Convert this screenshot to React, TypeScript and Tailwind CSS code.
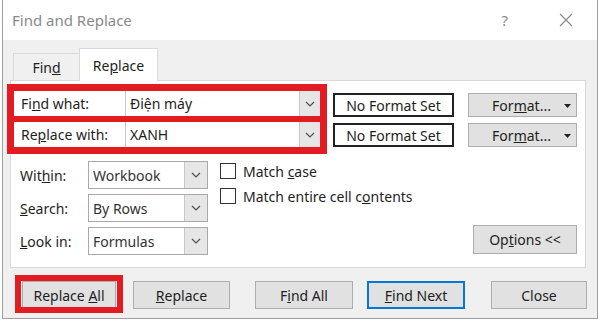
import React from "react";

const Chevron: React.FC = () => (
  <svg width="10" height="6" viewBox="0 0 10 6" fill="none">
    <polyline points="1,1 5,5 9,1" stroke="#505050" strokeWidth="1.2" />
  </svg>
);

const Caret: React.FC = () => (
  <svg width="7" height="4" viewBox="0 0 7 4">
    <polygon points="0,0 7,0 3.5,4" fill="#222" />
  </svg>
);

const Select: React.FC<{ value: string }> = ({ value }) => (
  <div className="flex h-[28px] w-[120px] border border-[#a9a9a9] bg-white">
    <div className="flex flex-1 items-center pl-[4px] text-[14px] text-[#333]">
      {value}
    </div>
    <div className="flex w-[23px] items-center justify-center border-l border-[#c8c8c8] bg-[#e6e6e6]">
      <Chevron />
    </div>
  </div>
);

const Btn: React.FC<{ w: string; children: React.ReactNode; primary?: boolean }> = ({
  w,
  children,
  primary,
}) => (
  <div
    className={`flex h-[28px] items-center justify-center bg-[#e1e1e1] text-[14px] text-[#1e1e1e] ${w} ${
      primary ? "border-2 border-[#0078d7]" : "border border-[#adadad]"
    }`}
  >
    <span>{children}</span>
  </div>
);

const Check: React.FC<{ children: React.ReactNode }> = ({ children }) => (
  <div className="flex h-[16px] items-center gap-[7px]">
    <div className="h-[16px] w-[16px] border-[1.5px] border-[#333] bg-white" />
    <span className="text-[14px] text-[#1e1e1e]">{children}</span>
  </div>
);

export default function App() {
  return (
    <div className="h-[322px] w-[600px] overflow-hidden bg-white font-['Noto_Sans',sans-serif]">
      <div className="ml-[2px] flex h-[319px] w-[596px] flex-col border-x border-b border-[#a0a0a0] bg-[#f0f0f0]">
        {/* title bar */}
        <div className="flex h-[40px] items-center bg-white pl-[9px]">
          <span className="text-[15px] text-[#8a8a8a]">Find and Replace</span>
          <span className="ml-auto text-[15px] text-[#8a8a8a]">?</span>
          <svg className="ml-[51px] mr-[24px]" width="14" height="14" viewBox="0 0 14 14">
            <path d="M1 1 L13 13 M13 1 L1 13" stroke="#8a8a8a" strokeWidth="1.1" />
          </svg>
        </div>

        {/* tabs */}
        <div className="flex h-[40px] items-end pl-[10px]">
          <div className="flex h-[27px] w-[66px] items-center justify-center border border-b-0 border-r-0 border-[#d9d9d9] text-[14px] text-[#1e1e1e]">
            <span>
              Fin<u>d</u>
            </span>
          </div>
          <div className="relative z-10 -mb-px flex h-[33px] w-[79px] items-center justify-center border border-b-0 border-[#d9d9d9] bg-white text-[14px] text-[#1e1e1e]">
            <span>
              Re<u>p</u>lace
            </span>
          </div>
        </div>

        {/* panel */}
        <div className="ml-[7px] flex h-[188px] w-[576px] flex-col border border-[#d9d9d9] bg-white">
          <div className="mt-[3px] flex">
            <div className="-ml-[4px] flex w-[320px] flex-col gap-[6px] border-[7px] border-[#e31b23] bg-[#e31b23]">
              <div className="flex h-[25px] bg-white">
                <div className="flex w-[111px] items-center pl-[7px] text-[14px] text-[#1e1e1e]">
                  <span>
                    Fi<u>n</u>d what:
                  </span>
                </div>
                <div className="flex flex-1 border-l border-[#c8c8c8]">
                  <div className="flex flex-1 items-center pl-[4px] text-[14px] text-[#1e1e1e]">
                    Điện máy
                  </div>
                  <div className="flex w-[21px] items-center justify-center border-l border-[#c8c8c8] bg-[#e6e6e6]">
                    <Chevron />
                  </div>
                </div>
              </div>
              <div className="flex h-[25px] bg-white">
                <div className="flex w-[111px] items-center pl-[7px] text-[14px] text-[#1e1e1e]">
                  <span>
                    Re<u>p</u>lace with:
                  </span>
                </div>
                <div className="flex flex-1 border-l border-[#c8c8c8]">
                  <div className="flex flex-1 items-center pl-[4px] text-[14px] text-[#1e1e1e]">
                    XANH
                  </div>
                  <div className="flex w-[21px] items-center justify-center border-l border-[#c8c8c8] bg-[#e6e6e6]">
                    <Chevron />
                  </div>
                </div>
              </div>
            </div>

            <div className="ml-[6px] mt-[9px] flex flex-col gap-[6px]">
              {[0, 1].map((i) => (
                <div
                  key={i}
                  className="flex h-[24px] w-[121px] items-center justify-center border-2 border-[#222] text-[14px] text-[#1e1e1e]"
                >
                  No Format Set
                </div>
              ))}
            </div>

            <div className="ml-[14px] mt-[9px] flex flex-col gap-[6px]">
              {[0, 1].map((i) => (
                <div
                  key={i}
                  className="relative flex h-[24px] w-[109px] items-center justify-center border border-[#adadad] bg-[#e1e1e1] text-[14px] text-[#1e1e1e]"
                >
                  <span className="-ml-[2px]">
                    For<u>m</u>at...
                  </span>
                  <span className="absolute right-[5px] top-[10px] flex">
                    <Caret />
                  </span>
                </div>
              ))}
            </div>
          </div>

          <div className="mt-[7px] flex pl-[9px] pr-[8px]">
            <div className="flex flex-col gap-[5px]">
              {[
                [<>Wit<u>h</u>in:</>, "Workbook"],
                [<><u>S</u>earch:</>, "By Rows"],
                [<><u>L</u>ook in:</>, "Formulas"],
              ].map(([label, value], i) => (
                <div key={i} className="flex h-[28px] items-center">
                  <div className="w-[68px] text-[14px] text-[#1e1e1e]">{label}</div>
                  <Select value={value as string} />
                </div>
              ))}
            </div>
            <div className="ml-[12px] mt-[2px] flex flex-col gap-[9px]">
              <Check>
                Match <u>c</u>ase
              </Check>
              <Check>
                Match entire cell c<u>o</u>ntents
              </Check>
            </div>
            <div className="mb-[1px] ml-auto self-end">
              <Btn w="w-[104px] h-[29px]">
                Op<u>t</u>ions &lt;&lt;
              </Btn>
            </div>
          </div>
        </div>

        {/* bottom buttons */}
        <div className="mt-[13px] flex pl-[19px]">
          <div className="relative">
            <div className="absolute -bottom-[4px] -left-[7px] -right-[7px] -top-[6px] border-[6px] border-[#e31b23]" />
            <Btn w="w-[94px]">
              Replace <u>A</u>ll
            </Btn>
          </div>
          <div className="ml-[17px]">
            <Btn w="w-[97px]">
              <u>R</u>eplace
            </Btn>
          </div>
          <div className="ml-[25px]">
            <Btn w="w-[98px]">
              F<u>i</u>nd All
            </Btn>
          </div>
          <div className="ml-[14px]">
            <Btn w="w-[98px]" primary>
              <u>F</u>ind Next
            </Btn>
          </div>
          <div className="ml-[26px]">
            <Btn w="w-[96px]">Close</Btn>
          </div>
        </div>
      </div>
    </div>
  );
}
